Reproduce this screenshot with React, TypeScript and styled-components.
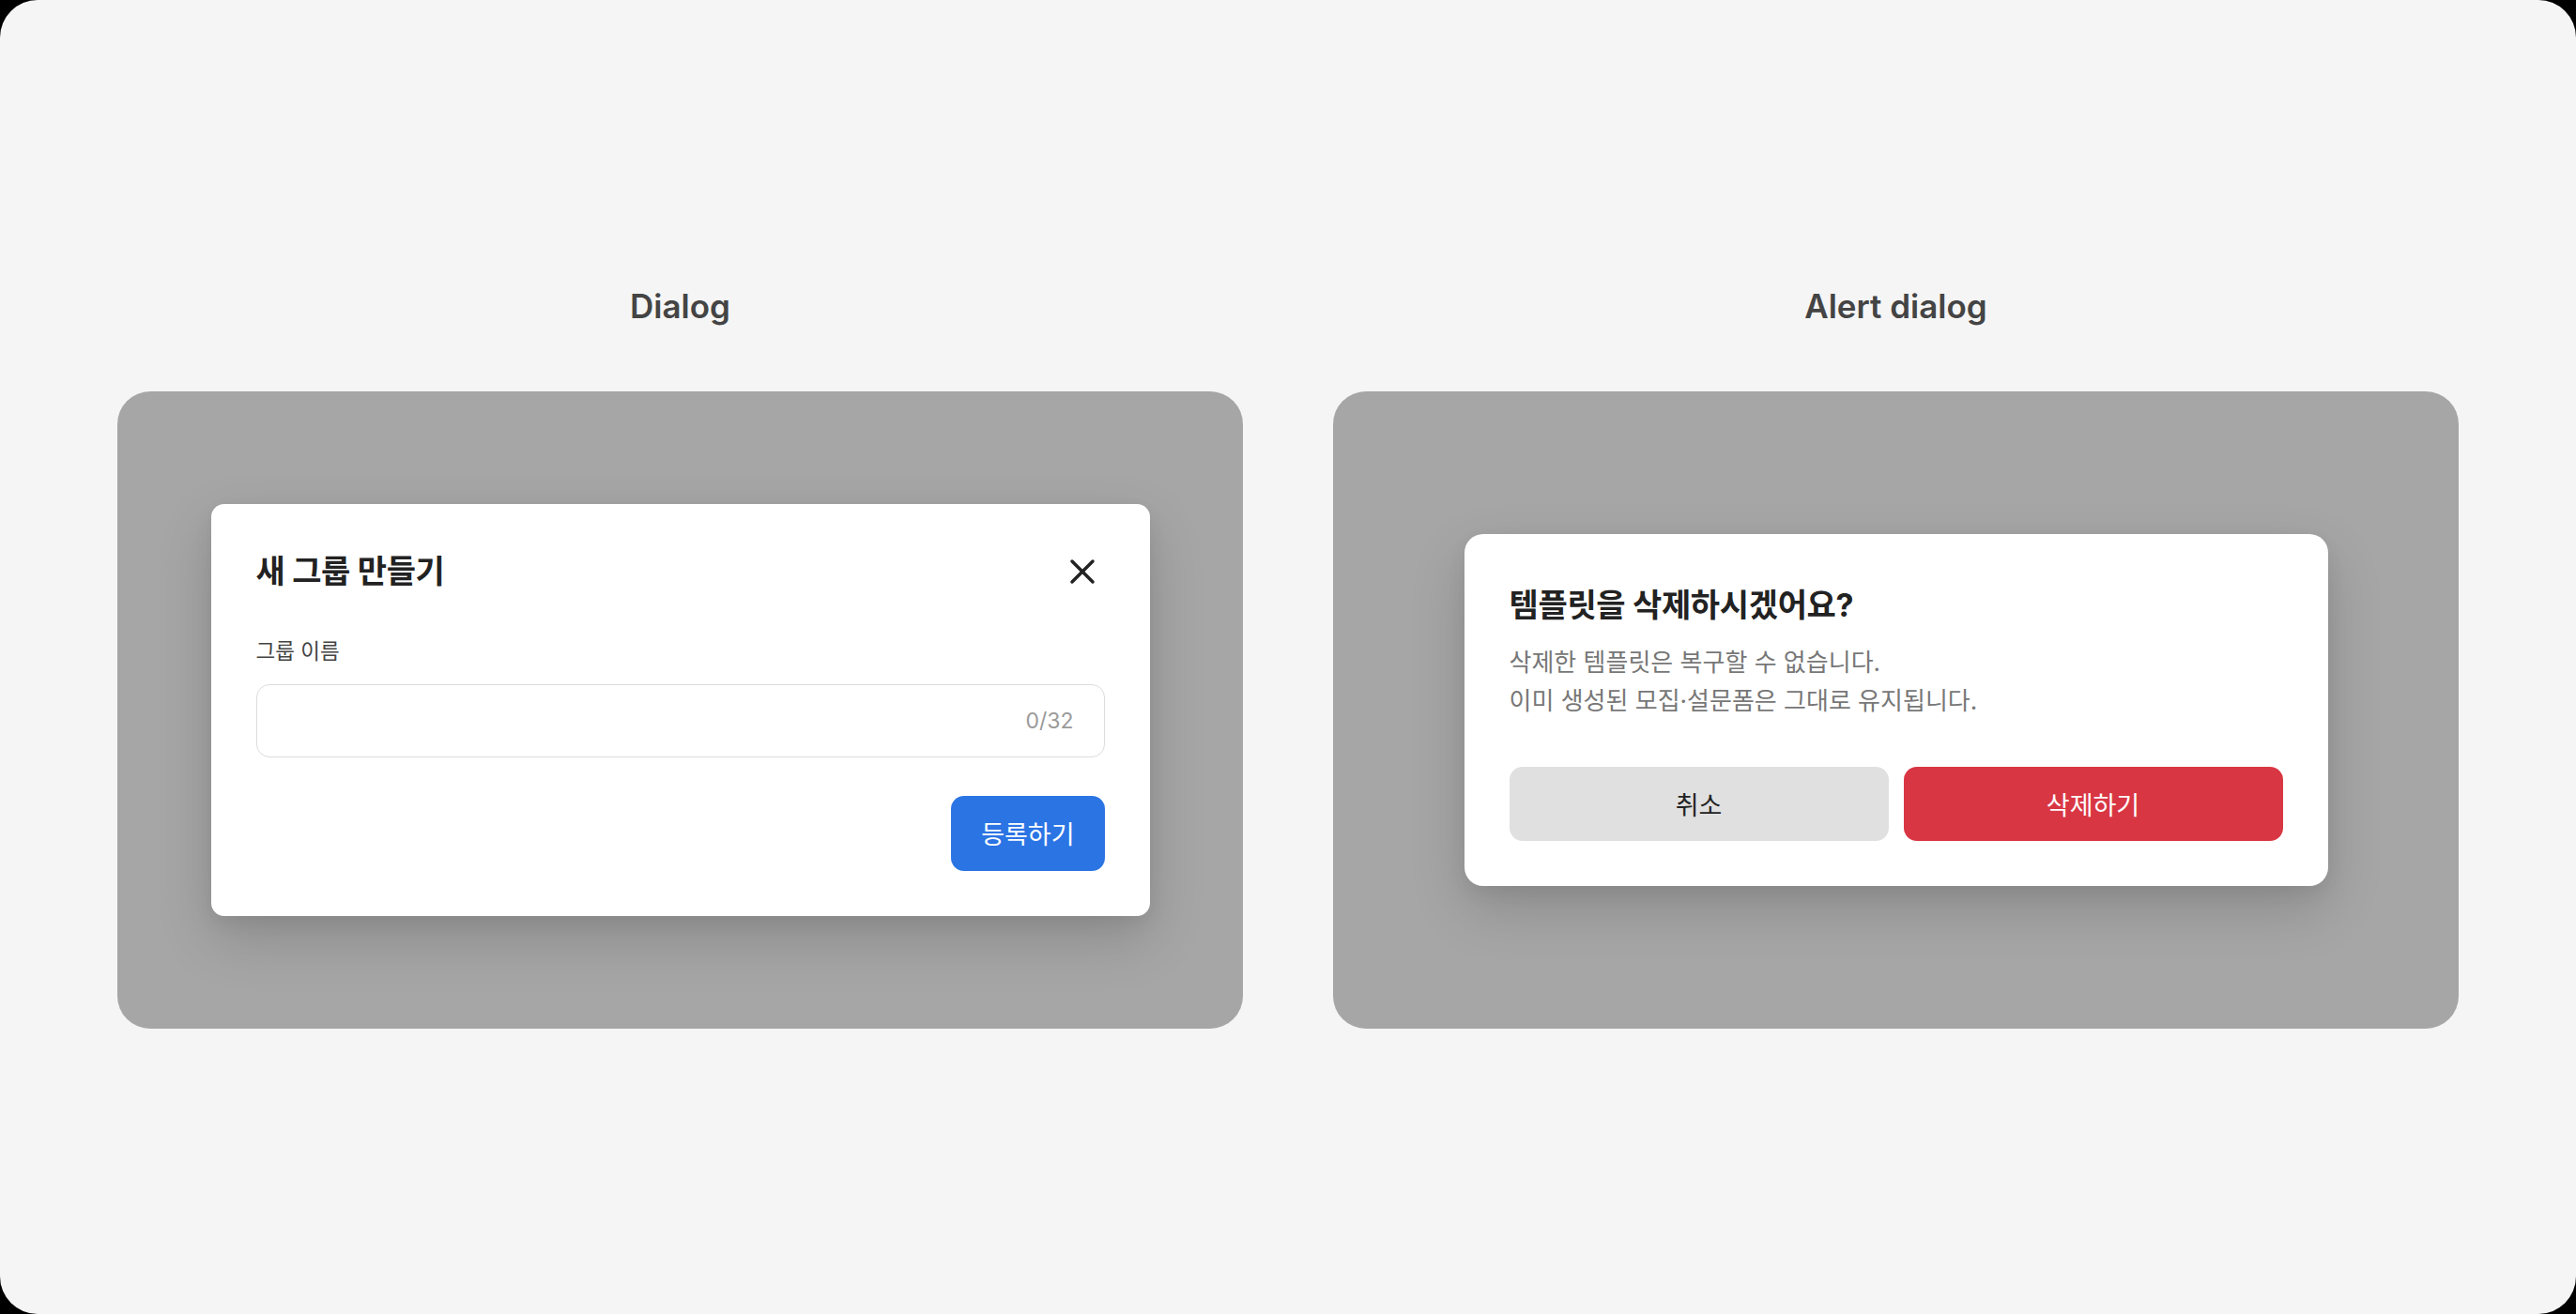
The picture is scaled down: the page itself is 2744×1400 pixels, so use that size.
import styled, { createGlobalStyle } from 'styled-components';
import { X } from 'lucide-react';

const GlobalStyle = createGlobalStyle`
  html, body {
    margin: 0;
    padding: 0;
    background: #000;
  }

  * {
    box-sizing: border-box;
  }
`;

const Page = styled.div`
  width: 100vw;
  height: 100vh;
  display: flex;
  align-items: center;
  justify-content: center;
  gap: 96px;
  background: #f5f5f5;
  border-radius: 40px;
  font-family: 'Inter', 'Noto Sans CJK KR', sans-serif;
`;

const Section = styled.section`
  display: flex;
  flex-direction: column;
  align-items: center;
  gap: 70px;
`;

const SectionTitle = styled.h2`
  margin: 0;
  font-size: 35px;
  line-height: 42px;
  font-weight: 600;
  color: #444;
`;

const Backdrop = styled.div`
  width: 1199px;
  height: 679px;
  display: flex;
  align-items: center;
  justify-content: center;
  background: #a6a6a6;
  border-radius: 35px;
`;

const Modal = styled.div<{ $width: number; $radius: number }>`
  width: ${(p) => p.$width}px;
  padding: 48px;
  display: flex;
  flex-direction: column;
  background: #fff;
  border-radius: ${(p) => p.$radius}px;
  box-shadow: 0 24px 60px rgba(0, 0, 0, 0.16), 0 8px 20px rgba(0, 0, 0, 0.06);
`;

const Header = styled.div`
  display: flex;
  align-items: center;
  justify-content: space-between;
  height: 48px;
`;

const Title = styled.h3<{ $lineHeight?: number }>`
  margin: 0;
  font-size: 34px;
  line-height: ${(p) => p.$lineHeight ?? 48}px;
  font-weight: 700;
  color: #222;
  letter-spacing: -0.01em;
`;

const CloseButton = styled.button`
  width: 44px;
  height: 44px;
  margin-right: 2px;
  padding: 0;
  display: flex;
  align-items: center;
  justify-content: center;
  border: none;
  background: none;
  color: #222;
  cursor: pointer;
`;

const Label = styled.label`
  margin-top: 46px;
  font-size: 22.5px;
  line-height: 30px;
  color: #444;
`;

const Field = styled.div`
  margin-top: 20px;
  height: 78px;
  display: flex;
  align-items: center;
  padding: 0 32px 0 28px;
  border: 1.5px solid #dcdcdc;
  border-radius: 14px;
`;

const TextInput = styled.input`
  flex: 1;
  min-width: 0;
  border: none;
  outline: none;
  background: none;
  font: inherit;
  font-size: 24px;
  color: #222;
`;

const Counter = styled.span`
  font-size: 23px;
  color: #9a9a9a;
`;

const Footer = styled.div`
  margin-top: 41px;
  display: flex;
  justify-content: flex-end;
`;

const Button = styled.button<{ $variant: 'primary' | 'neutral' | 'danger' }>`
  height: 80px;
  min-width: 162px;
  padding: 0 32px;
  border: none;
  border-radius: 14px;
  font-family: inherit;
  font-size: 27px;
  font-weight: 400;
  cursor: pointer;
  background: ${(p) =>
    p.$variant === 'primary' ? '#2b74e4' : p.$variant === 'danger' ? '#d93644' : '#e0e0e0'};
  color: ${(p) => (p.$variant === 'neutral' ? '#222' : '#fff')};
`;

const Description = styled.p`
  margin: 12px 0 0;
  font-size: 26px;
  line-height: 41px;
  color: #777;
`;

const Actions = styled.div`
  margin-top: 50px;
  display: grid;
  grid-template-columns: 1fr 1fr;
  gap: 16px;

  & > button {
    height: 79px;
  }
`;

export default function App() {
  return (
    <>
      <GlobalStyle />
      <Page>
        <Section>
          <SectionTitle>Dialog</SectionTitle>
          <Backdrop>
            <Modal $width={1000} $radius={14}>
              <Header>
                <Title>새 그룹 만들기</Title>
                <CloseButton aria-label="닫기">
                  <X size={44} strokeWidth={1.9} />
                </CloseButton>
              </Header>
              <Label htmlFor="group-name">그룹 이름</Label>
              <Field>
                <TextInput id="group-name" maxLength={32} />
                <Counter>0/32</Counter>
              </Field>
              <Footer>
                <Button $variant="primary">등록하기</Button>
              </Footer>
            </Modal>
          </Backdrop>
        </Section>
        <Section>
          <SectionTitle>Alert dialog</SectionTitle>
          <Backdrop>
            <Modal $width={920} $radius={20}>
              <Title $lineHeight={56}>템플릿을 삭제하시겠어요?</Title>
              <Description>
                삭제한 템플릿은 복구할 수 없습니다.
                <br />
                이미 생성된 모집·설문폼은 그대로 유지됩니다.
              </Description>
              <Actions>
                <Button $variant="neutral">취소</Button>
                <Button $variant="danger">삭제하기</Button>
              </Actions>
            </Modal>
          </Backdrop>
        </Section>
      </Page>
    </>
  );
}
